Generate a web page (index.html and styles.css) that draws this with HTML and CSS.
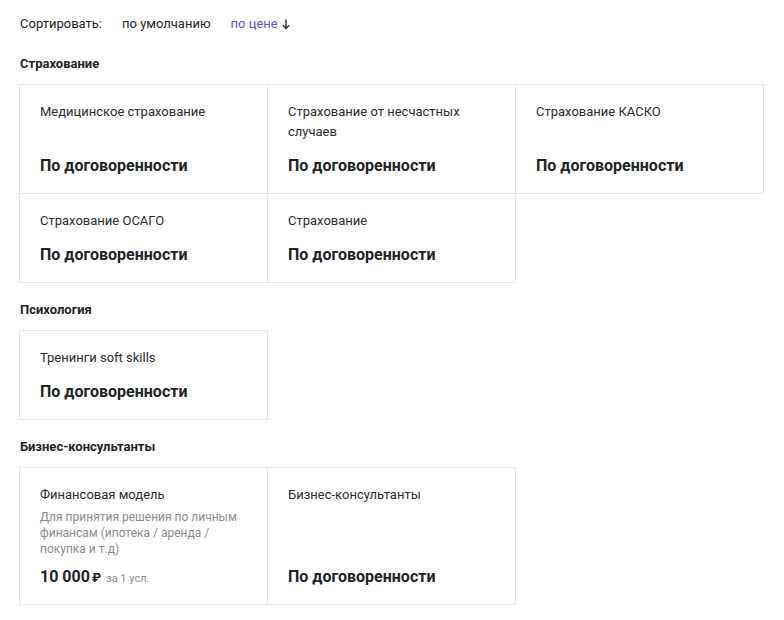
FILE: index.html
```html
<!DOCTYPE html>
<html lang="ru">
<head>
<meta charset="utf-8">
<link rel="stylesheet" href="styles.css">
</head>
<body>
<div class="page">
  <div class="sort">
    <span class="sort-label">Сортировать:</span>
    <span class="sort-opt">по умолчанию</span>
    <span class="sort-opt active">по цене <svg class="arrow" width="8" height="11" viewBox="0 0 8 11"><path d="M4 0.5V9.5M0.8 6.3L4 9.6L7.2 6.3" fill="none" stroke="#333" stroke-width="1.4"/></svg></span>
  </div>

  <section class="section">
    <h2 class="section-title">Страхование</h2>
    <div class="grid">
      <div class="card"><div class="card-title">Медицинское страхование</div><div class="card-price">По договоренности</div></div>
      <div class="card"><div class="card-title">Страхование от несчастных случаев</div><div class="card-price">По договоренности</div></div>
      <div class="card"><div class="card-title">Страхование КАСКО</div><div class="card-price">По договоренности</div></div>
      <div class="card"><div class="card-title">Страхование ОСАГО</div><div class="card-price">По договоренности</div></div>
      <div class="card"><div class="card-title">Страхование</div><div class="card-price">По договоренности</div></div>
    </div>
  </section>

  <section class="section">
    <h2 class="section-title">Психология</h2>
    <div class="grid">
      <div class="card"><div class="card-title">Тренинги soft skills</div><div class="card-price">По договоренности</div></div>
    </div>
  </section>

  <section class="section">
    <h2 class="section-title">Бизнес-консультанты</h2>
    <div class="grid">
      <div class="card card--desc">
        <div class="card-title">Финансовая модель</div>
        <div class="card-desc">Для принятия решения по личным финансам (ипотека / аренда / покупка и т.д)</div>
        <div class="card-price">10 000<span class="rub">₽</span><span class="unit">за 1 усл.</span></div>
      </div>
      <div class="card"><div class="card-title">Бизнес-консультанты</div><div class="card-price">По договоренности</div></div>
    </div>
  </section>
</div>
</body>
</html>
```

FILE: styles.css
```css
* { box-sizing: border-box; }
html, body { margin: 0; padding: 0; background: #fff; }
body {
  font-family: Roboto, "Liberation Sans", Arial, sans-serif;
  color: #222326;
  font-size: 13px;
  line-height: 20px;
}
.page { padding: 14px 20px 20px; }

.sort { display: flex; align-items: center; height: 20px; }
.sort-label { margin-right: 20px; }
.sort-opt { margin-right: 20px; }
.sort-opt.active { color: #6a4ce0; display: inline-flex; align-items: center; }
.arrow { margin-left: 4px; margin-top: 1px; }

.section { margin-top: 20px; }
.section + .section { margin-top: 17px; }
.section-title {
  margin: 0 0 10px;
  font-size: 13px;
  line-height: 20px;
  font-weight: 700;
}

.grid {
  display: grid;
  grid-template-columns: repeat(3, 248px);
  padding: 1px 0 0 0;
}
.card {
  display: flex;
  flex-direction: column;
  border: 1px solid #e6e6ea;
  margin: -1px 0 0 -1px;
  padding: 17px 20px 15px;
}
.card--desc { padding-bottom: 13px; }
.card-title { font-size: 13px; line-height: 20px; color: #2a2b2f; }
.card-desc {
  margin: 4px 0 -4px;
  font-size: 12px;
  line-height: 16px;
  color: #8a8b90;
}
.card-price {
  margin-top: auto;
  padding-top: 12px;
  font-size: 16px;
  line-height: 24px;
  font-weight: 700;
  color: #222326;
}
.rub { font-size: 13px; margin-left: 2px; }
.unit { font-size: 11px; font-weight: 400; color: #8a8b90; margin-left: 5px; }
```
